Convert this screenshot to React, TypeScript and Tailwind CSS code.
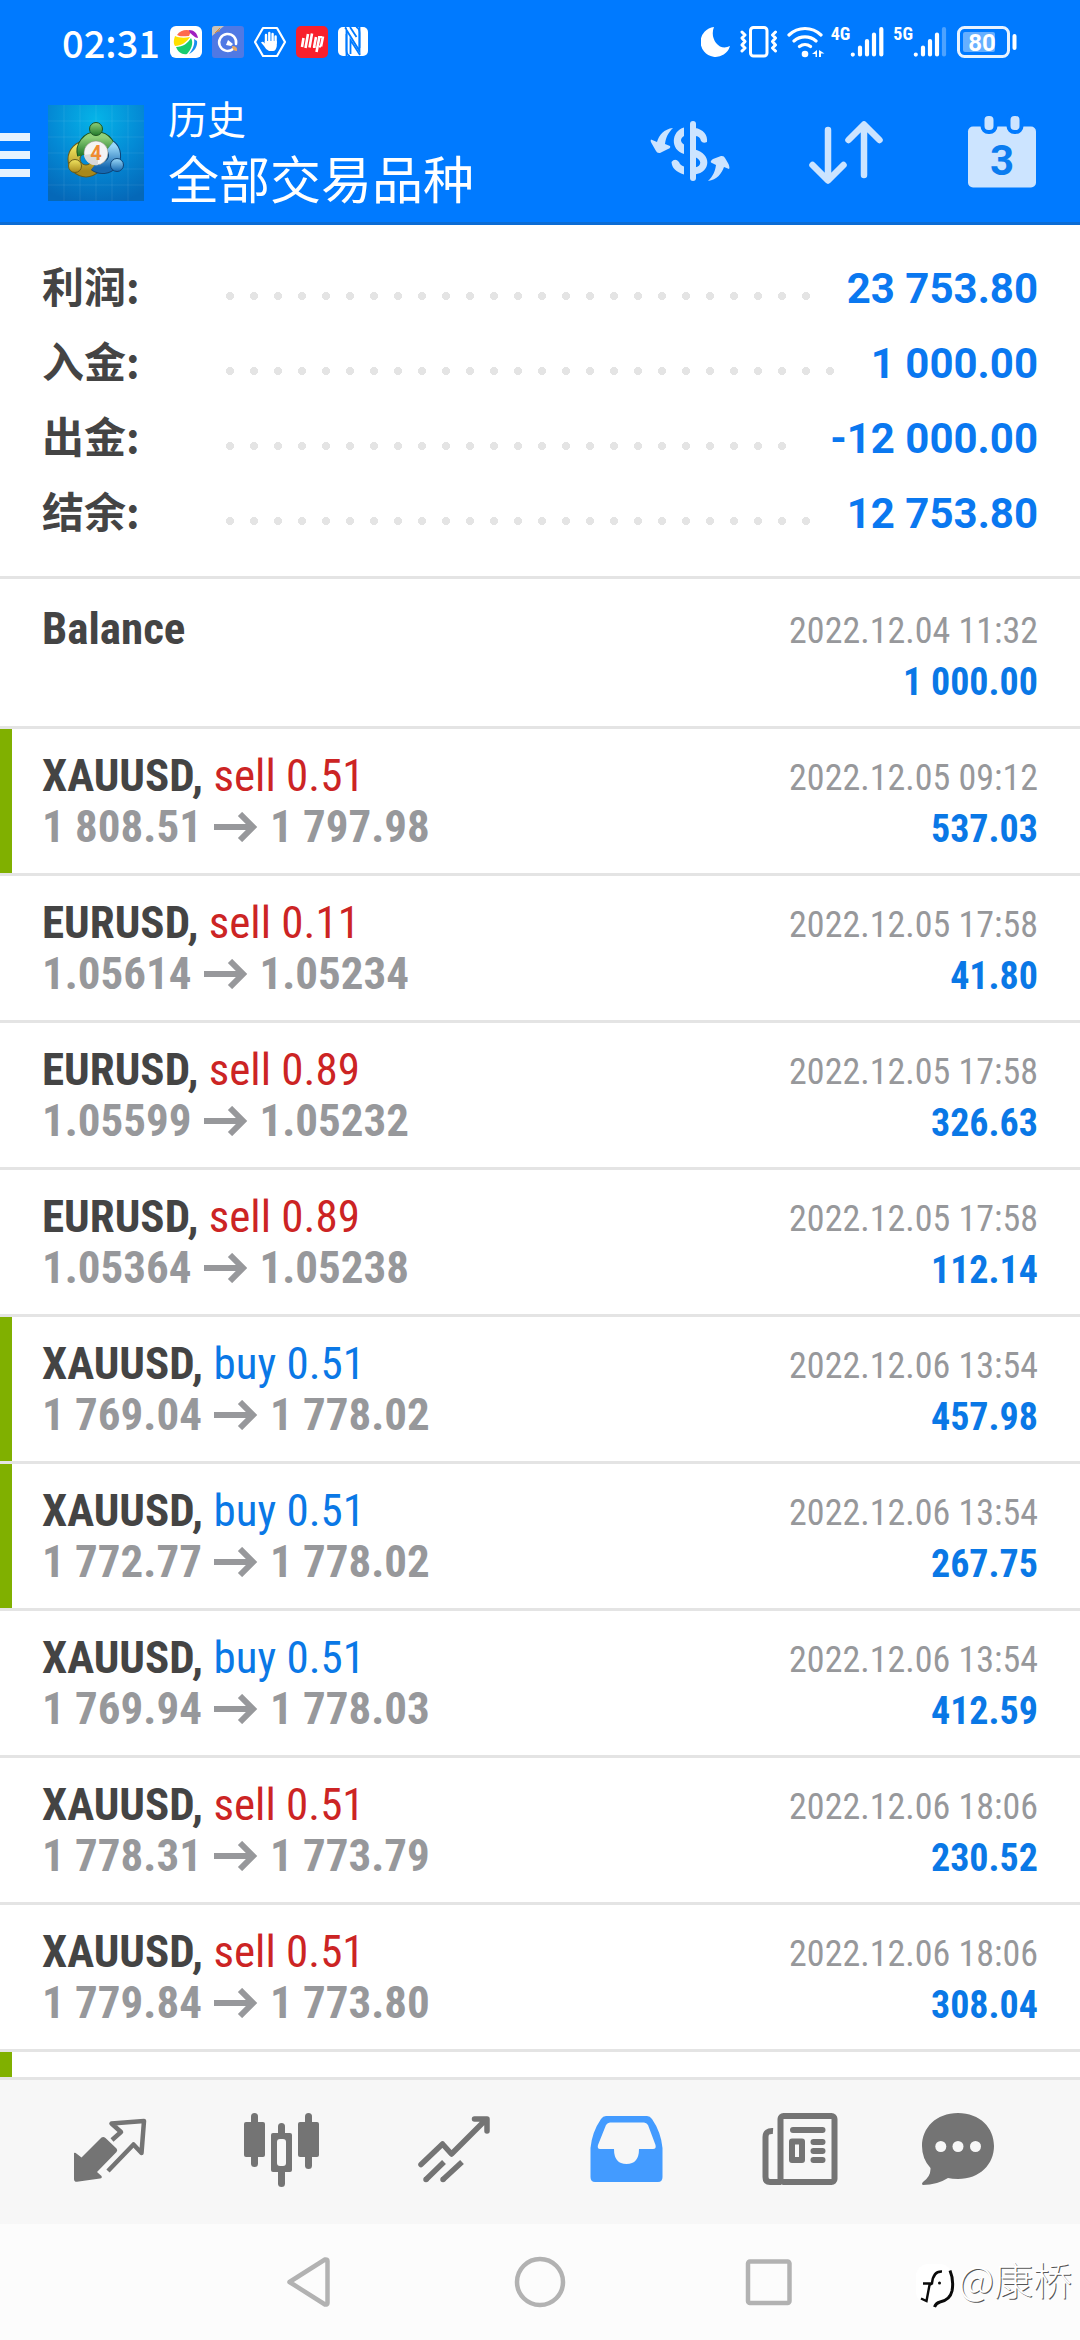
import React from 'react';

type Deal = {
  symbol: string;
  side?: 'buy' | 'sell';
  volume?: string;
  open?: string;
  close?: string;
  time: string;
  profit: string;
  marked?: boolean;
};

const summary = [
  { label: '利润:', value: '23 753.80' },
  { label: '入金:', value: '1 000.00' },
  { label: '出金:', value: '-12 000.00' },
  { label: '结余:', value: '12 753.80' },
];

const deals: Deal[] = [
  { symbol: 'XAUUSD', side: 'sell', volume: '0.51', open: '1 808.51', close: '1 797.98', time: '2022.12.05 09:12', profit: '537.03', marked: true },
  { symbol: 'EURUSD', side: 'sell', volume: '0.11', open: '1.05614', close: '1.05234', time: '2022.12.05 17:58', profit: '41.80' },
  { symbol: 'EURUSD', side: 'sell', volume: '0.89', open: '1.05599', close: '1.05232', time: '2022.12.05 17:58', profit: '326.63' },
  { symbol: 'EURUSD', side: 'sell', volume: '0.89', open: '1.05364', close: '1.05238', time: '2022.12.05 17:58', profit: '112.14' },
  { symbol: 'XAUUSD', side: 'buy', volume: '0.51', open: '1 769.04', close: '1 778.02', time: '2022.12.06 13:54', profit: '457.98', marked: true },
  { symbol: 'XAUUSD', side: 'buy', volume: '0.51', open: '1 772.77', close: '1 778.02', time: '2022.12.06 13:54', profit: '267.75', marked: true },
  { symbol: 'XAUUSD', side: 'buy', volume: '0.51', open: '1 769.94', close: '1 778.03', time: '2022.12.06 13:54', profit: '412.59' },
  { symbol: 'XAUUSD', side: 'sell', volume: '0.51', open: '1 778.31', close: '1 773.79', time: '2022.12.06 18:06', profit: '230.52' },
  { symbol: 'XAUUSD', side: 'sell', volume: '0.51', open: '1 779.84', close: '1 773.80', time: '2022.12.06 18:06', profit: '308.04' },
];

const StatusBar: React.FC = () => (
  <div className="flex h-[84px] items-center justify-between pl-[62px] pr-[62px] text-white">
    <div className="flex items-center gap-[10px]">
      <span className="font-['Noto_Sans_CJK_SC',sans-serif] text-[38px] font-medium leading-[44px]">02:31</span>

      {/* Gallery */}
      <svg className="h-8 w-8" viewBox="0 0 32 32">
        <rect width="32" height="32" rx="6" fill="#fff" />
        <path d="M7 9C10 4 17 3 21 5L19 10C14 10 10 11 7 9Z" fill="#ff6a4d" />
        <path d="M19 4C24 4 27 7 28 12C25 12 23 9 20 7Z" fill="#a020c0" />
        <path d="M5 10C9 12 15 12 20 11C17 16 11 20 5 20C3 17 4 13 5 10Z" fill="#ffe000" />
        <path d="M6 21C13 21 18 17 21 12C24 17 21 24 17 28C12 29 8 26 6 21Z" fill="#18cc70" />
        <path d="M24 13L27 15C28 20 24 26 19 28C23 23 25 18 24 13Z" fill="#1a90f0" />
      </svg>

      {/* Launcher */}
      <svg className="h-8 w-8" viewBox="0 0 32 32">
        <rect width="32" height="32" rx="3" fill="#4f79e4" />
        <path d="M0 10V3Q0 0 3 0H12Z" fill="#c9c2b8" />
        <path d="M3 7L8 2M5 5L8 5" stroke="#e08a2a" strokeWidth="1" />
        <path d="M21 23A8.500 8.500 0 1 1 24 18" fill="none" stroke="#fff" strokeWidth="2.500" strokeLinecap="round" />
        <path d="M16 14L21 18L19 20L14 19Z" fill="#fff" />
        <path d="M20 20Q26 20 25 25Q20 25 20 20Z" fill="#e8a860" />
      </svg>

      {/* Blocker */}
      <svg className="h-8 w-8" viewBox="0 0 32 32">
        <path d="M9 2H23L31 16L23 30H9L1 16Z" fill="none" stroke="#fff" strokeWidth="2.200" strokeLinejoin="round" />
        <path
          d="M12 17V9M15.300 16V7M18.600 16V8M21.600 17V10.500"
          stroke="#fff"
          strokeWidth="2.400"
          strokeLinecap="round"
        />
        <path d="M10.800 15H22.800V20Q22 25 19 25H15Q12 24 10 20L7 16.500Q9 14.500 10.800 17.500Z" fill="#fff" />
      </svg>

      {/* News */}
      <svg className="h-8 w-8" viewBox="0 0 32 32">
        <rect width="32" height="32" rx="5" fill="#f8202c" />
        <path
          d="M7.500 12L6 21M12 8L9.500 22M16 7.500L13.500 21.500M20 11L18 21.500M23.500 10.500L20.500 26M27 10.500L25 20.500"
          stroke="#fff"
          strokeWidth="2.600"
        />
        <path d="M17 21H19.500M22 11H26M23 20.500H25" stroke="#fff" strokeWidth="2" />
      </svg>

      {/* NFC */}
      <svg className="h-8 w-[30px]" viewBox="0 0 30 32">
        <rect y="1" width="30" height="29" rx="5" fill="#fff" />
        <path d="M8.500 30V4L21.500 25V1" fill="none" stroke="#007aff" strokeWidth="1.800" />
        <path d="M8.500 8V24Q8.500 29 12 30M21.500 22V7Q21.500 2 18 1M12.500 28V14L22 29M7 1.500L8.500 3M12 1L18.500 11" fill="none" stroke="#007aff" strokeWidth="1.800" />
      </svg>
    </div>

    <div className="flex items-center">
      {/* Do not disturb */}
      <svg className="h-8 w-[30px]" viewBox="0 0 30 32">
        <path d="M13 1A13.500 15 0 0 0 19 20.500Q24 22.500 29 20A15 15 0 1 1 13 1Z" fill="#fff" />
      </svg>

      {/* Vibrate */}
      <svg className="ml-[9px] h-8 w-[38px]" viewBox="0 0 38 32" fill="none" stroke="#fff">
        <rect x="10.500" y="1.500" width="16.500" height="28.500" rx="3" strokeWidth="3" />
        <path d="M2 6L5 9L2 12L5 15.500L2 19L5 22L2 25M35.500 6L32.500 9L35.500 12L32.500 15.500L35.500 19L32.500 22L35.500 25" strokeWidth="3" strokeLinejoin="round" strokeLinecap="round" />
      </svg>

      {/* Wifi */}
      <svg className="ml-[9px] h-8 w-[38px]" viewBox="0 0 38 32" fill="none" stroke="#fff" strokeWidth="3.200" strokeLinecap="round">
        <path d="M2 9A23 23 0 0 1 34 9M7 15A17 17 0 0 1 29 15M12.500 20.500A9 9 0 0 1 23.500 20.500" />
        <circle cx="18" cy="28" r="3.300" fill="#fff" stroke="none" />
        <path d="M25 28L30 24V31H28.500V28ZM32 24L37.500 27.500H34V31H32Z" fill="#fff" stroke="none" />
      </svg>

      <span className="ml-[6px] self-start font-['Roboto_Condensed','Liberation_Sans_Narrow',sans-serif] text-[18px] font-bold leading-4">4G</span>
      <svg className="h-8 w-[34px]" viewBox="0 0 34 32" stroke="#fff" strokeWidth="4.200" strokeLinecap="round">
        <path d="M2.800 28.500V28.600M10 21.500V28.500M17 15V28.500M24 8.500V28.500M31.300 3V28.500" />
      </svg>
      <span className="ml-[9px] self-start font-['Roboto_Condensed','Liberation_Sans_Narrow',sans-serif] text-[18px] font-bold leading-4">5G</span>
      <svg className="h-8 w-[34px]" viewBox="0 0 34 32" stroke="#fff" strokeWidth="4.200" strokeLinecap="round">
        <path d="M2.800 28.500V28.600M10 21.500V28.500M17 15V28.500M24 8.500V28.500" />
        <path d="M31 3V28.500" stroke="#4da2ff" />
      </svg>

      {/* Battery */}
      <svg className="ml-[10px] h-8 w-[61px]" viewBox="0 0 61 32">
        <rect x="1.500" y="1.500" width="50" height="29" rx="6" fill="none" stroke="#e8f3ff" strokeWidth="3" />
        <rect x="6" y="6" width="32" height="20" rx="2" fill="#66afff" />
        <rect x="55.500" y="8" width="4" height="16" rx="2" fill="#fff" />
        <text x="25" y="25" textAnchor="middle" fill="#fff" className="font-['Roboto',sans-serif] text-[24px] font-bold">
          80
        </text>
      </svg>
    </div>
  </div>
);

const AppLogo: React.FC = () => (
  <svg className="ml-[18px] h-24 w-24" viewBox="0 0 96 96">
    <defs>
      <radialGradient id="sky" cx="0.5" cy="0.15" r="0.9">
        <stop offset="0" stopColor="#05b4e8" />
        <stop offset="0.55" stopColor="#0488d4" />
        <stop offset="1" stopColor="#0568b8" />
      </radialGradient>
      <linearGradient id="green" x1="0" y1="0" x2="0" y2="1">
        <stop offset="0" stopColor="#8fd07a" />
        <stop offset="1" stopColor="#237a2c" />
      </linearGradient>
      <linearGradient id="gold" x1="0" y1="0" x2="0" y2="1">
        <stop offset="0" stopColor="#f0e460" />
        <stop offset="1" stopColor="#a8881a" />
      </linearGradient>
      <linearGradient id="blue" x1="0" y1="0" x2="0" y2="1">
        <stop offset="0" stopColor="#9ad8f8" />
        <stop offset="1" stopColor="#1668b0" />
      </linearGradient>
    </defs>
    <rect width="96" height="96" fill="url(#sky)" />
    <path
      d="M16 0V96M32 0V96M48 0V96M64 0V96M80 0V96M0 16H96M0 32H96M0 48H96M0 64H96M0 80H96"
      stroke="#fff"
      strokeOpacity="0.08"
    />
    <circle cx="38" cy="54" r="12" fill="none" stroke="#6b5c18" strokeWidth="13" />
    <circle cx="38" cy="54" r="12" fill="none" stroke="url(#gold)" strokeWidth="11" />
    <path d="M35 50A14 14 0 1 1 62 50" fill="none" stroke="#1c5420" strokeWidth="12" />
    <path d="M35 50A14 14 0 1 1 62 50" fill="none" stroke="url(#green)" strokeWidth="10" />
    <path d="M62 41A12 12 0 1 1 47 60" fill="none" stroke="#0e4478" strokeWidth="13" />
    <path d="M62 41A12 12 0 1 1 47 60" fill="none" stroke="url(#blue)" strokeWidth="11" />
    <circle cx="48" cy="24" r="6.500" fill="url(#green)" stroke="#1c5420" />
    <circle cx="27" cy="61" r="6.500" fill="url(#gold)" stroke="#6b5c18" />
    <circle cx="69" cy="60" r="6.500" fill="url(#blue)" stroke="#0e4478" />
    <circle cx="48" cy="48" r="12" fill="#f4f4f4" stroke="#8a8a80" strokeWidth="0.500" />
    <path d="M36 50A12 12 0 0 0 50 60L50 48Z" fill="#d8d8d8" />
    <text x="48" y="55" textAnchor="middle" fill="#f08a30" className="font-['Roboto',sans-serif] text-[20px] font-bold">
      4
    </text>
  </svg>
);

const AppBar: React.FC = () => (
  <div className="flex h-[138px] items-center pr-[30px]">
    <button type="button" aria-label="Menu" className="h-24 w-[30px]">
      <svg className="h-24 w-[30px]" viewBox="0 0 30 96" fill="#e6f3ff">
        <path d="M0 28H30V36H0ZM0 46H30V54H0ZM0 64H30V72H0Z" />
      </svg>
    </button>
    <AppLogo />
    <div className="ml-6 flex flex-col pb-3 font-['Noto_Sans_CJK_SC',sans-serif] text-white">
      <span className="text-[39px] leading-[60px]">历史</span>
      <h1 className="text-[51px] leading-[60px]">全部交易品种</h1>
    </div>

    <div className="ml-auto flex gap-[60px] text-[#cce4ff]">
      <button type="button" aria-label="Symbols" className="h-24 w-24">
        <svg className="h-24 w-24" viewBox="0 0 96 96" fill="currentColor">
          <path d="M51 19V73" stroke="currentColor" strokeWidth="6" strokeLinecap="round" />
          <path d="M42 22.500C29 26 28 45 42 49V39.500C38 37 38 33.500 42 31Z" />
          <path d="M53 23C61 24 66 30 65 37Q61 39 59 36Q58 31 53 31Z" />
          <path d="M53 44.500C70 49 69 67 53 69.500V62.500C60 61 60 55 53 52Z" />
          <path d="M29.500 57Q33 52.500 37 57Q38 60 42 61.500V69.500C34 67 30 63 29.500 57Z" />
          <path d="M31 23C22 24 17 30 15 37L9 34.500Q8 36 10 39L14 46Q15 48.500 18 48L26 44Q29 43 28 41L23 39C24 32 26 28 31 23Z" />
          <path d="M66 76C75 75 80 68 82 62L87 64Q88 63 86.500 59L83 53Q82 50.500 79 51L71 54Q68 56 69 57.500L74 60C73 67 71 71 66 76Z" />
        </svg>
      </button>
      <button type="button" aria-label="Sort" className="h-24 w-24">
        <svg
          className="h-24 w-24"
          viewBox="0 0 96 96"
          fill="none"
          stroke="currentColor"
          strokeWidth="6.500"
          strokeLinecap="round"
          strokeLinejoin="round"
        >
          <path d="M30 25V75M14.500 60L30 75.500L45.500 60M66 70V20M50.500 35L66 19.500L81.500 35" />
        </svg>
      </button>
      <button type="button" aria-label="Period" className="h-24 w-24">
        <svg className="h-24 w-24" viewBox="0 0 96 96">
          <rect x="14" y="21.500" width="68" height="61" rx="5" fill="currentColor" />
          <g fill="currentColor" stroke="#007aff" strokeWidth="4">
            <rect x="28.500" y="9" width="13" height="18" rx="6" />
            <rect x="54.500" y="9" width="13" height="18" rx="6" />
          </g>
          <text x="48" y="70" textAnchor="middle" fill="#0a7cf0" className="font-['Roboto',sans-serif] text-[42px] font-bold">
            3
          </text>
        </svg>
      </button>
    </div>
  </div>
);

const DealRow: React.FC<{ deal: Deal }> = ({ deal }) => (
  <li className="border-b-[3px] border-[#e4e4e4]">
    <div
      className={`flex items-start justify-between border-l-[12px] pb-[18px] pl-[30px] pr-[42px] pt-[21px] leading-[51px] ${
        deal.marked ? 'border-[#80b000]' : 'border-transparent'
      }`}
    >
      <div className="text-[45px]">
        <p>
          <span className="font-bold text-[#444444]">{deal.symbol},</span>{' '}
          <span className={deal.side === 'buy' ? 'text-[#0a78e6]' : 'text-[#cc2424]'}>
            {deal.side} {deal.volume}
          </span>
        </p>
        <p className="flex items-center gap-3 font-bold text-[#97989b]">
          {deal.open}
          <svg className="h-[30px] w-11" viewBox="0 0 44 30" fill="none" stroke="currentColor" strokeWidth="6">
            <path d="M0 15H39M26 2L39 15L26 28" />
          </svg>
          {deal.close}
        </p>
      </div>
      <div className="pt-[3px] text-right">
        <p className="text-[36px] text-[#97989b]">{deal.time}</p>
        <p className="text-[38px] font-bold text-[#0a78e6]">{deal.profit}</p>
      </div>
    </div>
  </li>
);

const TabBar: React.FC = () => (
  <nav className="grid h-[147px] grid-cols-6 items-center border-t-[3px] border-[#e4e4e4] bg-[#f7f7f7] px-6 text-[#747474]">
    <button type="button" aria-label="Quotes" className="flex justify-center">
      <svg className="h-24 w-24" viewBox="0 0 96 96">
        <path
          d="M12 49Q13 48 15 50L19.500 53.500L39.500 33.500Q41.500 32.500 43.500 34L54.500 44.500Q56 46 54.500 48L35 68L39.500 72Q40.500 74 38 74.500L15 77.800Q12 78 12 75Z"
          fill="currentColor"
        />
        <path
          d="M50 36L59 28L49.500 19.500L82 17L79.500 49L71.500 40.500L46 67"
          fill="none"
          stroke="currentColor"
          strokeWidth="4.500"
          strokeLinejoin="round"
        />
      </svg>
    </button>
    <button type="button" aria-label="Chart" className="flex justify-center">
      <svg className="h-24 w-24" viewBox="0 0 96 96" fill="currentColor">
        <rect x="10" y="18" width="21" height="35" rx="2" />
        <rect x="17" y="9" width="7" height="54" rx="3.500" />
        <rect x="64" y="18" width="21" height="35" rx="2" />
        <rect x="71" y="9" width="7" height="56" rx="3.500" />
        <rect x="44" y="19" width="7" height="64" rx="3.500" />
        <rect x="37" y="29" width="21" height="39" rx="2" />
        <rect x="43" y="35" width="9" height="27" rx="3" fill="#f7f7f7" />
      </svg>
    </button>
    <button type="button" aria-label="Trade" className="flex justify-center">
      <svg className="h-24 w-24" viewBox="0 0 96 96" fill="none" stroke="currentColor" strokeWidth="5.500" strokeLinejoin="round">
        <path d="M15 60.500L36.500 40L45.500 50L80 15.500M68.500 15H81V27" strokeLinecap="round" />
        <path d="M20 75.500L38 58M37 75.500L56 58" />
        <path d="M20 75.500H20.010M37 75.500H37.010" strokeLinecap="round" />
      </svg>
    </button>
    <button type="button" aria-label="History" className="flex justify-center text-[#439bff]">
      <svg className="h-24 w-24" viewBox="0 0 96 96" fill="currentColor" fillRule="evenodd">
        <path d="M28 12H69Q72 12 74 15Q83 28 84.500 44V73Q84.500 78 80 78H17Q12.500 78 12.500 73V44Q14 28 23 15Q25 12 28 12ZM32 18.500Q29.500 18.500 28 21L20 41Q19 45 22 45H36Q36 60 48.500 60Q61 60 61 45H75Q78.500 45 77.500 41L70 21Q68.500 18.500 66 18.500Z" />
      </svg>
    </button>
    <button type="button" aria-label="News" className="flex justify-center">
      <svg className="h-24 w-24" viewBox="0 0 96 96" fill="none" stroke="currentColor" strokeWidth="6">
        <rect x="30.500" y="12" width="54" height="66" rx="3" />
        <path d="M23 27Q15.500 26.500 15.500 33V73Q15.500 78 20 78H31" />
        <path d="M43 26H72.500M63.500 38H72.500M63.500 47H72.500M63.500 56H72.500" strokeLinecap="round" />
        <rect x="42" y="37.500" width="10" height="18.500" strokeLinejoin="round" />
      </svg>
    </button>
    <button type="button" aria-label="Messages" className="flex justify-center">
      <svg className="h-24 w-24" viewBox="0 0 96 96" fill="currentColor">
        <path d="M36 9C58 9 72 24 72 42S58 75 36 75Q30 75 26 74Q15 81 1 81Q-1 80 1 78Q9 72 8.500 64Q0 55 0 42C0 24 14 9 36 9Z" />
        <g fill="#f7f7f7">
          <circle cx="18.800" cy="42.500" r="5.500" />
          <circle cx="36" cy="42.500" r="5.500" />
          <circle cx="53.500" cy="42.500" r="5.500" />
        </g>
      </svg>
    </button>
  </nav>
);

const SystemNav: React.FC = () => (
  <div className="relative flex h-[116px] items-center justify-center gap-[170px] bg-[#fcfcfc] text-[#b2b2b2]">
    <button type="button" aria-label="Back">
      <svg className="h-[60px] w-[60px]" viewBox="0 0 60 60" fill="none" stroke="currentColor" strokeWidth="4.500" strokeLinejoin="round">
        <path d="M9.500 30L45 7.500Q47.500 7 47.500 9V51Q47.500 53 45 52.500Z" />
      </svg>
    </button>
    <button type="button" aria-label="Home">
      <svg className="h-[60px] w-[60px]" viewBox="0 0 60 60" fill="none" stroke="currentColor" strokeWidth="4.500">
        <circle cx="30" cy="30" r="23" />
      </svg>
    </button>
    <button type="button" aria-label="Recents">
      <svg className="h-[60px] w-[60px]" viewBox="0 0 60 60" fill="none" stroke="currentColor" strokeWidth="4.500">
        <rect x="8" y="9.500" width="41.500" height="41.500" rx="2" />
      </svg>
    </button>

    {/* Watermark */}
    <div className="absolute right-2 top-6 flex items-center gap-1">
      <svg className="mt-3 h-12 w-10" viewBox="0 0 40 48" fill="none">
        <rect x="1" y="4" width="36" height="40" rx="12" fill="#fff" />
        <path d="M27 11.500Q18 11 17 23.500L14.500 25L11.500 41L6 38.500M8 23.500H17" stroke="#0a0a0a" strokeWidth="2.400" />
        <path d="M35 10.500Q39 20 37 31Q35 40 25 42Q21 43 19.500 47" stroke="#0a0a0a" strokeWidth="3" />
        <circle cx="24.500" cy="23" r="1.500" fill="#0a0a0a" />
      </svg>
      <span className="font-['Noto_Sans_CJK_SC',sans-serif] text-[39px] font-light leading-[48px] text-white [text-shadow:1px_1px_0_#555]">
        @康桥
      </span>
    </div>
  </div>
);

const App: React.FC = () => {
  return (
    <div className="flex h-screen flex-col bg-white font-['Roboto',sans-serif]">
      <header className="border-b-[3px] border-[#0c6cd4] bg-[#007aff]">
        <StatusBar />
        <AppBar />
      </header>

      <main className="flex min-h-0 flex-1 flex-col overflow-hidden">
        <dl className="border-b-[3px] border-[#e4e4e4] px-[42px] pb-[25px] pt-[26px] text-[42px] font-bold">
          {summary.map((row) => (
            <div key={row.label} className="flex items-start">
              <dt className="w-44 font-['Noto_Sans_CJK_SC',sans-serif] leading-[68px] text-[#444444]">{row.label}</dt>
              <span className="mr-8 mt-[41px] h-2 flex-1 bg-[radial-gradient(circle,#e4e4e4_4px,transparent_4px)] bg-[length:24px_8px]" />
              <dd className="leading-[75px] text-[#0a78f0]">{row.value}</dd>
            </div>
          ))}
        </dl>

        <ul className="flex flex-1 flex-col font-['Roboto_Condensed','Liberation_Sans_Narrow',Roboto,sans-serif]">
          <li className="flex items-start justify-between border-b-[3px] border-[#e4e4e4] px-[42px] pb-[18px] pt-6 leading-[51px]">
            <span className="text-[45px] font-bold text-[#444444]">Balance</span>
            <div className="pt-[3px] text-right">
              <p className="text-[36px] text-[#97989b]">2022.12.04 11:32</p>
              <p className="text-[38px] font-bold text-[#0a78e6]">1 000.00</p>
            </div>
          </li>
          {deals.map((deal, i) => (
            <DealRow key={i} deal={deal} />
          ))}
          <li className="flex-1 border-l-[12px] border-[#80b000]" />
        </ul>
      </main>

      <TabBar />
      <SystemNav />
    </div>
  );
};

export default App;
